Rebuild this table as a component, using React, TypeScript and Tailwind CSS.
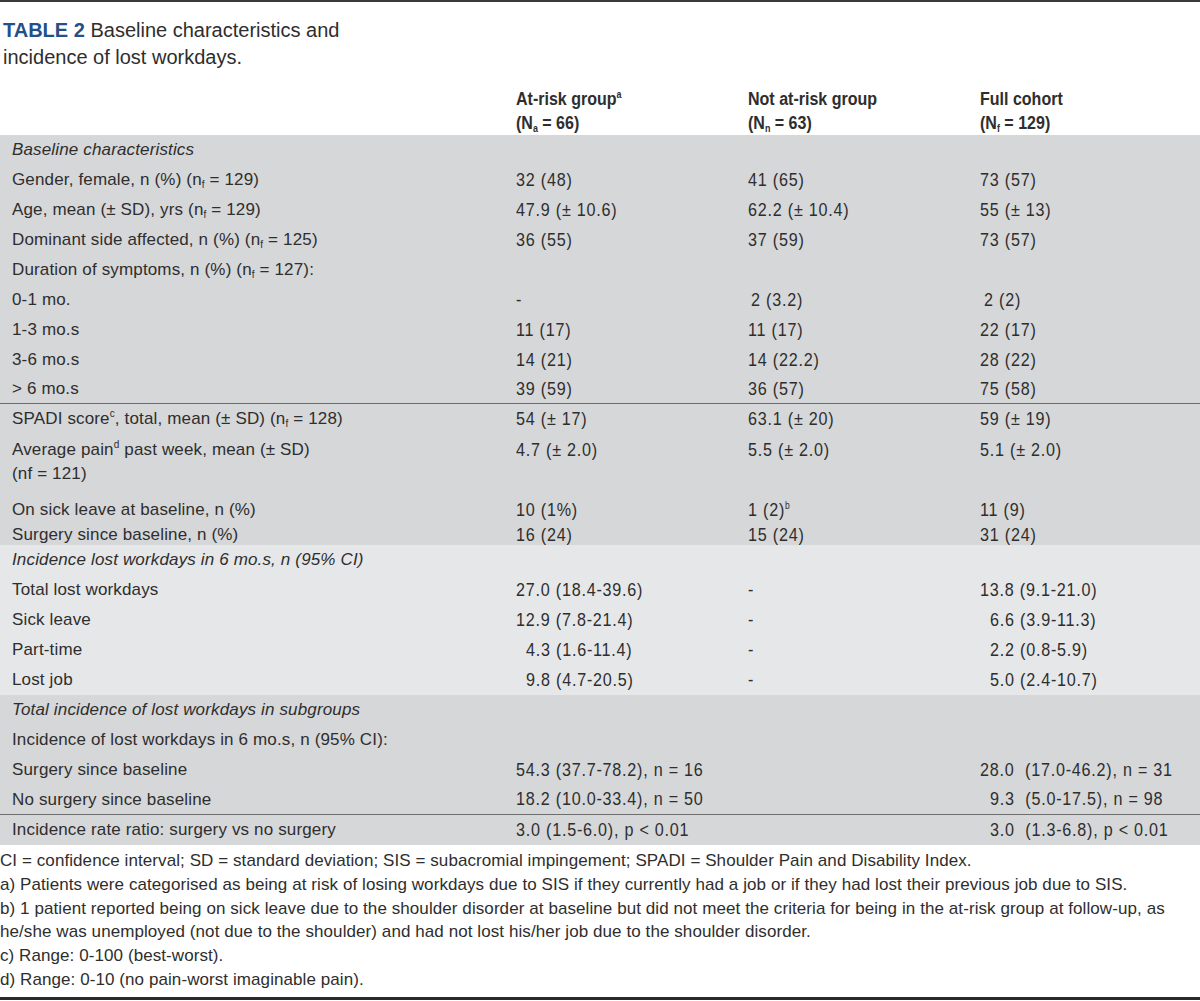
import React from "react";

type Row = {
  label: React.ReactNode;
  a?: React.ReactNode;
  b?: React.ReactNode;
  c?: React.ReactNode;
  italic?: boolean;
  h?: string;
  pa?: string;
  pb?: string;
  pc?: string;
};

// small sub / sup markers
const Sub = ({ t }: { t: string }) => (
  <span className="relative top-[3px] text-[10px] leading-none">{t}</span>
);
const Sup = ({ t }: { t: string }) => (
  <span className="relative top-[-7px] text-[10px] leading-none">{t}</span>
);

const nf = (n: string) => (
  <>
    (n<Sub t="f" /> = {n})
  </>
);

const baseline: Row[] = [
  { label: "Baseline characteristics", italic: true },
  { label: <>Gender, female, n (%) {nf("129")}</>, a: "32 (48)", b: "41 (65)", c: "73 (57)" },
  { label: <>Age, mean (± SD), yrs {nf("129")}</>, a: "47.9 (± 10.6)", b: "62.2 (± 10.4)", c: "55 (± 13)" },
  { label: <>Dominant side affected, n (%) {nf("125")}</>, a: "36 (55)", b: "37 (59)", c: "73 (57)" },
  { label: <>Duration of symptoms, n (%) {nf("127")}:</> },
  { label: "0-1 mo.", a: "-", b: "2 (3.2)", c: "2 (2)", pb: "pl-[15px]", pc: "pl-[16px]" },
  { label: "1-3 mo.s", a: "11 (17)", b: "11 (17)", c: "22 (17)" },
  { label: "3-6 mo.s", a: "14 (21)", b: "14 (22.2)", c: "28 (22)" },
  { label: "> 6 mo.s", a: "39 (59)", b: "36 (57)", c: "75 (58)", h: "h-[28px]" },
];

const scores: Row[] = [
  { label: <>SPADI score<Sup t="c" />, total, mean (± SD) {nf("128")}</>, a: "54 (± 17)", b: "63.1 (± 20)", c: "59 (± 19)" },
  {
    label: (
      <>
        Average pain<Sup t="d" /> past week, mean (± SD)
        <br />
        (nf = 121)
      </>
    ),
    a: "4.7 (± 2.0)",
    b: "5.5 (± 2.0)",
    c: "5.1 (± 2.0)",
    h: "h-[61px] items-start pt-[4px]",
  },
  { label: "On sick leave at baseline, n (%)", a: "10 (1%)", b: <>1 (2)<Sup t="b" /></>, c: "11 (9)" },
  { label: "Surgery since baseline, n (%)", a: "16 (24)", b: "15 (24)", c: "31 (24)", h: "h-[20px]" },
];

const incidence: Row[] = [
  { label: "Incidence lost workdays in 6 mo.s, n (95% CI)", italic: true },
  { label: "Total lost workdays", a: "27.0 (18.4-39.6)", b: "-", c: "13.8 (9.1-21.0)" },
  { label: "Sick leave", a: "12.9 (7.8-21.4)", b: "-", c: "6.6 (3.9-11.3)", pc: "pl-[22px]" },
  { label: "Part-time", a: "4.3 (1.6-11.4)", b: "-", c: "2.2 (0.8-5.9)", pa: "pl-[22px]", pc: "pl-[22px]" },
  { label: "Lost job", a: "9.8 (4.7-20.5)", b: "-", c: "5.0 (2.4-10.7)", pa: "pl-[22px]", pc: "pl-[22px]" },
];

const subgroups: Row[] = [
  { label: "Total incidence of lost workdays in subgroups", italic: true },
  { label: "Incidence of lost workdays in 6 mo.s, n (95% CI):" },
  { label: "Surgery since baseline", a: "54.3 (37.7-78.2), n = 16", c: "28.0  (17.0-46.2), n = 31" },
  { label: "No surgery since baseline", a: "18.2 (10.0-33.4), n = 50", c: "9.3  (5.0-17.5), n = 98", pc: "pl-[22px]", h: "h-[29px]" },
];

const ratio: Row[] = [
  { label: "Incidence rate ratio: surgery vs no surgery", a: "3.0 (1.5-6.0), p < 0.01", c: "3.0  (1.3-6.8), p < 0.01", pc: "pl-[22px]" },
];

// condensed look for the numbers
function Num({ children }: { children?: React.ReactNode }) {
  return (
    <span className="inline-block origin-left scale-x-[0.85] whitespace-pre text-[19px] tracking-[0.9px]">
      {children}
    </span>
  );
}

function TableRow({ row }: { row: Row }) {
  return (
    <div className={`flex items-center text-[17px] leading-[24px] tracking-[0.15px] ${row.h ?? "h-[30px]"}`}>
      <div className={`w-[504px] pl-3 ${row.italic ? "italic" : ""}`}>{row.label}</div>
      <div className={`w-[232px] ${row.pa ?? "pl-3"}`}>
        <Num>{row.a}</Num>
      </div>
      <div className={`w-[232px] ${row.pb ?? "pl-3"}`}>
        <Num>{row.b}</Num>
      </div>
      <div className={`w-[232px] ${row.pc ?? "pl-3"}`}>
        <Num>{row.c}</Num>
      </div>
    </div>
  );
}

function Head({ top, sub, n, sup }: { top: string; sub: string; n: string; sup?: string }) {
  return (
    <div className="w-[232px] pl-3">
      <div className="inline-block origin-left scale-x-[0.89] whitespace-nowrap">
        {top}
        {sup && <Sup t={sup} />}
        <br />
        (N<Sub t={sub} /> = {n})
      </div>
    </div>
  );
}

export default function App() {
  return (
    <div className="w-[1200px] bg-white text-[#2e2e2e] font-['Liberation_Sans',Arial,sans-serif]">
      {/* TOP RULE */}
      <div className="h-[2px] bg-[#3a3a3a]" />

      {/* TITLE */}
      <div className="pl-[3px] pt-[15px] text-[20px] leading-[27px]">
        <span className="font-bold text-[#24508a]">TABLE 2</span> Baseline characteristics and
        <br />
        incidence of lost workdays.
      </div>

      {/* HEADER */}
      <div className="flex mt-[16px] text-[18px] leading-[24px] font-bold">
        <div className="w-[504px]" />
        <Head top="At-risk group" sup="a" sub="a" n="66" />
        <Head top="Not at-risk group" sub="n" n="63" />
        <Head top="Full cohort" sub="f" n="129" />
      </div>

      {/* BODY */}
      <div className="bg-[#d6d7d9]">
        {baseline.map((r, i) => (
          <TableRow key={i} row={r} />
        ))}
        <div className="border-t border-[#6d6d6d]">
          {scores.map((r, i) => (
            <TableRow key={i} row={r} />
          ))}
        </div>
      </div>
      <div className="bg-[#e6e7e9]">
        {incidence.map((r, i) => (
          <TableRow key={i} row={r} />
        ))}
      </div>
      <div className="bg-[#d6d7d9]">
        {subgroups.map((r, i) => (
          <TableRow key={i} row={r} />
        ))}
        <div className="border-t border-[#6d6d6d]">
          {ratio.map((r, i) => (
            <TableRow key={i} row={r} />
          ))}
        </div>
      </div>

      {/* FOOTNOTES */}
      <div className="pt-[4px] pb-[5px] text-[17px] leading-[23.8px] tracking-[0.08px]">
        <p>CI = confidence interval; SD = standard deviation; SIS = subacromial impingement; SPADI = Shoulder Pain and Disability Index.</p>
        <p>a) Patients were categorised as being at risk of losing workdays due to SIS if they currently had a job or if they had lost their previous job due to SIS.</p>
        <p>
          b) 1 patient reported being on sick leave due to the shoulder disorder at baseline but did not meet the criteria for being in the at-risk group at follow-up, as
          <br />
          he/she was unemployed (not due to the shoulder) and had not lost his/her job due to the shoulder disorder.
        </p>
        <p>c) Range: 0-100 (best-worst).</p>
        <p>d) Range: 0-10 (no pain-worst imaginable pain).</p>
      </div>

      {/* BOTTOM RULE */}
      <div className="h-[3px] bg-[#2a2a2a]" />
    </div>
  );
}
